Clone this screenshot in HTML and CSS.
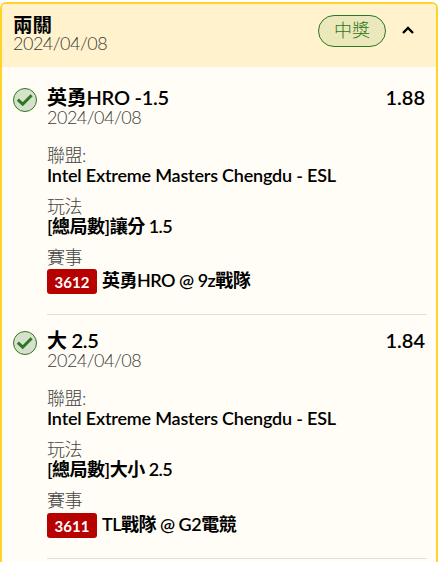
FILE: index.html
```
<!DOCTYPE html>
<html lang="zh-Hant">
<head>
  <meta charset="UTF-8">
  <meta name="viewport" content="width=device-width, initial-scale=1.0">
  <title>兩關</title>
  <link rel="stylesheet" href="styles.css">
</head>
<body>
  <div class="ticket">
    <div class="ticket-header">
      <div class="ticket-info">
        <div class="ticket-title">兩關</div>
        <div class="date">2024/04/08</div>
      </div>
      <div class="status">中獎</div>
      <svg class="arrow" viewBox="0 0 12 8"><path d="M1 7 L6 2 L11 7"/></svg>
    </div>

    <!-- 第一關 -->
    <div class="leg">
      <svg class="check" viewBox="0 0 24 24"><circle cx="12" cy="12" r="11.5"/><path d="M4.8 11.6 L9.7 16.2 L18.6 7.2"/></svg>
      <div class="leg-body">
        <div class="leg-top">
          <div class="leg-title"><b>英勇</b>HRO -1.5</div>
          <div class="odds">1.88</div>
        </div>
        <div class="date">2024/04/08</div>
        <dl class="details">
          <dt>聯盟:</dt>
          <dd class="league">Intel Extreme Masters Chengdu - ESL</dd>
          <dt>玩法</dt>
          <dd>[<b>總局數</b>]<b>讓分</b> 1.5</dd>
          <dt>賽事</dt>
          <dd class="match"><span class="code">3612</span><span><b>英勇</b>HRO @ 9z<b>戰隊</b></span></dd>
        </dl>
      </div>
    </div>

    <!-- 第二關 -->
    <div class="leg">
      <svg class="check" viewBox="0 0 24 24"><circle cx="12" cy="12" r="11.5"/><path d="M4.8 11.6 L9.7 16.2 L18.6 7.2"/></svg>
      <div class="leg-body">
        <div class="leg-top">
          <div class="leg-title"><b>大</b> 2.5</div>
          <div class="odds">1.84</div>
        </div>
        <div class="date">2024/04/08</div>
        <dl class="details">
          <dt>聯盟:</dt>
          <dd class="league">Intel Extreme Masters Chengdu - ESL</dd>
          <dt>玩法</dt>
          <dd>[<b>總局數</b>]<b>大小</b> 2.5</dd>
          <dt>賽事</dt>
          <dd class="match"><span class="code">3611</span><span>TL<b>戰隊</b> @ G2<b>電競</b></span></dd>
        </dl>
      </div>
    </div>
  </div>
</body>
</html>
```
FILE: styles.css
```
* {
  box-sizing: border-box;
}
body {
  margin: 0;
  height: 562px;
  overflow: hidden;
  background: #fff;
  color: #000;
  font-family: Lato, "Noto Sans CJK TC", sans-serif;
  font-size: 18px;
}
b {
  font-weight: 700;
}
.ticket {
  width: 438px;
  height: 560px;
  margin-top: 2px;
  border: 2px solid #ffd42a;
  border-bottom: 0;
  border-radius: 6px 6px 0 0;
  background: #fffdf5;
  overflow: hidden;
}
.ticket-header {
  display: flex;
  align-items: flex-start;
  height: 63px;
  padding: 10px 20px 0 11px;
  background: #fff2cc;
}
.ticket-info {
  flex: 1;
}
.ticket-title {
  height: 20px;
  font-size: 19.5px;
  line-height: 22px;
  font-weight: 700;
}
.date {
  font-size: 18px;
  line-height: 18px;
  font-weight: 300;
  letter-spacing: -0.5px;
  color: #3c3c3c;
}
.status {
  width: 68px;
  height: 32px;
  margin-top: 1px;
  border: 1px solid #2e7622;
  border-radius: 16px;
  background: #ebe8bb;
  color: #2e7622;
  font-size: 18px;
  line-height: 29px;
  font-weight: 300;
  text-align: center;
}
.arrow {
  width: 12px;
  height: 8px;
  margin: 12px 2px 0 16px;
  fill: none;
  stroke: #000;
  stroke-width: 2.4;
}
.leg {
  display: flex;
  gap: 10px;
  height: 243.4px;
  padding: 0 9px 0 11px;
}
.check {
  flex: none;
  width: 24px;
  height: 24px;
  margin-top: 21px;
}
.check circle {
  fill: #d5e2cb;
  stroke: #2e7622;
}
.check path {
  fill: none;
  stroke: #2e7622;
  stroke-width: 3;
}
.leg-body {
  flex: 1;
  height: 248.2px;
  padding-top: 19px;
  border-bottom: 1px solid #e2e0da;
}
.leg-top {
  display: flex;
  justify-content: space-between;
  padding-right: 2px;
  font-size: 20px;
  line-height: 22px;
  font-weight: 600;
}
.leg-title {
  letter-spacing: -0.25px;
}
.details {
  margin: 18px 0 0;
}
.details dt {
  height: 21px;
  line-height: 23px;
  font-weight: 300;
  letter-spacing: -0.5px;
  color: #444;
}
.details dd {
  height: 30px;
  margin: 0;
  line-height: 20px;
  font-weight: 600;
  letter-spacing: -0.5px;
}
.details .league {
  letter-spacing: -0.2px;
}
.details .match {
  display: flex;
  padding-top: 2.2px;
  line-height: 22px;
}
.code {
  width: 50px;
  height: 25px;
  margin-right: 5px;
  border-radius: 3px;
  background: #b70000;
  color: #fff;
  font-size: 15px;
  line-height: 27px;
  font-weight: 700;
  letter-spacing: 0;
  text-align: center;
}
```
